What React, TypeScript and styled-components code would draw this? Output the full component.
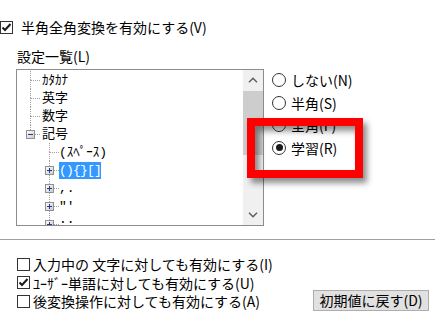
import styled, { createGlobalStyle } from 'styled-components'

const GlobalStyle = createGlobalStyle`
  html, body {
    margin: 0;
    padding: 0;
    background: #ffffff;
  }
  body {
    font-family: 'Noto Sans CJK JP', sans-serif;
    font-size: 14px;
    color: #000;
  }
`

const Page = styled.div`
  position: relative;
  width: 440px;
  height: 323px;
  overflow: hidden;
  background: #fff;
  display: flex;
  flex-direction: column;
`

const CheckRow = styled.label<{ $gap: number; $h: number }>`
  display: flex;
  align-items: center;
  gap: ${p => p.$gap}px;
  height: ${p => p.$h}px;
  line-height: ${p => p.$h}px;
  white-space: nowrap;
`

const TopRow = styled(CheckRow)`
  margin-top: 18px;
`

const Box = styled.span`
  flex: none;
  width: 13px;
  height: 13px;
  box-sizing: border-box;
  border: 1px solid #333;
  background: #fff;
  display: flex;
  align-items: center;
  justify-content: center;
`

const GroupLabel = styled.div`
  margin: 11px 0 0 17px;
  height: 18px;
  line-height: 18px;
`

const Middle = styled.div`
  display: flex;
  align-items: flex-start;
  margin-top: 4px;
`

const ListBox = styled.div`
  margin-left: 16px;
  width: 248px;
  height: 157px;
  box-sizing: border-box;
  border: 1px solid #8c8c8c;
  display: flex;
  background: #fff;
`

const TreeArea = styled.div`
  flex: 1;
  padding: 1px 0 0 4px;
  overflow: hidden;
`

const TreeRow = styled.div`
  display: flex;
  align-items: center;
  height: 18px;
`

const Label = styled.span<{ $selected?: boolean; $level: number; $tight?: boolean }>`
  margin-left: ${p => (p.$level === 0 ? 2 : 0)}px;
  height: 17px;
  line-height: 17px;
  font-family: 'Liberation Mono', 'Noto Sans CJK JP', monospace;
  font-size: 13px;
  white-space: nowrap;
  letter-spacing: ${p => (p.$tight ? '-0.8px' : '0')};
  background: ${p => (p.$selected ? '#3399ff' : 'transparent')};
  color: ${p => (p.$selected ? '#fff' : '#000')};
`

const ScrollBar = styled.div`
  flex: none;
  width: 20px;
  background: #f0f0f0;
  display: flex;
  flex-direction: column;
`

const ScrollButton = styled.div`
  height: 20px;
  display: flex;
  align-items: center;
  justify-content: center;
`

const Thumb = styled.div`
  margin-top: 1px;
  height: 64px;
  background: #cdcdcd;
`

const Track = styled.div`
  flex: 1;
`

const RadioGroup = styled.div`
  margin-left: 8px;
  display: flex;
  flex-direction: column;
`

const RadioRow = styled.label`
  display: flex;
  align-items: center;
  gap: 5px;
  height: 22.5px;
  white-space: nowrap;
`

const Circle = styled.span<{ $on?: boolean }>`
  flex: none;
  width: 14px;
  height: 14px;
  box-sizing: border-box;
  border: 1px solid #333;
  border-radius: 50%;
  background: #fff;
  display: flex;
  align-items: center;
  justify-content: center;

  &::after {
    content: '';
    display: ${p => (p.$on ? 'block' : 'none')};
    width: 7px;
    height: 7px;
    border-radius: 50%;
    background: #1a1a1a;
  }
`

const Separator = styled.div`
  margin-top: 13px;
  width: 435px;
  height: 1px;
  background: #a0a0a0;
`

const Bottom = styled.div`
  display: flex;
  justify-content: space-between;
  align-items: flex-end;
  padding: 15px 11px 0 17px;
`

const Options = styled.div`
  display: flex;
  flex-direction: column;
`

const Button = styled.button`
  width: 116px;
  height: 21px;
  padding: 0;
  box-sizing: border-box;
  border: 1px solid #adadad;
  background: #e1e1e1;
  font-family: 'Noto Sans CJK JP', sans-serif;
  font-size: 14px;
  line-height: 19px;
  color: #000;
`

const Callout = styled.div`
  position: absolute;
  left: 247px;
  top: 118px;
  width: 116px;
  height: 60px;
  box-sizing: border-box;
  border: 8px solid #ff0000;
  box-shadow: 4px 5px 6px rgba(0, 0, 0, 0.45), inset 4px 5px 6px rgba(0, 0, 0, 0.45);
`

const Check = () => (
  <svg width="11" height="11" viewBox="0 0 11 11">
    <polyline points="1.5,5.5 4,8 9.5,2" fill="none" stroke="#1a1a1a" strokeWidth="2" />
  </svg>
)

const Chevron = ({ down }: { down?: boolean }) => (
  <svg width="10" height="6" viewBox="0 0 10 6">
    <polyline
      points={down ? '1,0.8 5,4.8 9,0.8' : '1,5.2 5,1.2 9,5.2'}
      fill="none"
      stroke="#606060"
      strokeWidth="1.5"
    />
  </svg>
)

interface GutterProps {
  up?: boolean
  down?: boolean
  branch?: boolean
  expander?: 'plus' | 'minus'
}

const dot = { stroke: '#a0a0a0', strokeWidth: 1, strokeDasharray: '1 1' }

function Gutter({ up, down, branch, expander }: GutterProps) {
  const top = expander ? 5 : 9
  const bottom = expander ? 14 : 9
  return (
    <svg width="19" height="18" style={{ flex: 'none' }}>
      <defs>
        <linearGradient id="exp" x1="0" y1="0" x2="1" y2="1">
          <stop offset="0" stopColor="#ffffff" />
          <stop offset="1" stopColor="#c8c8c8" />
        </linearGradient>
      </defs>
      {up && <line x1="9.5" y1="0" x2="9.5" y2={top} {...dot} />}
      {down && <line x1="9.5" y1={bottom} x2="9.5" y2="18" {...dot} />}
      {up && down && !expander && <line x1="9.5" y1="9" x2="9.5" y2="10" {...dot} />}
      {branch && <line x1={expander ? 14 : 10} y1="9.5" x2="19" y2="9.5" {...dot} />}
      {expander && (
        <>
          <rect x="5.5" y="5.5" width="8" height="8" fill="url(#exp)" stroke="#919191" />
          <line x1="7" y1="9.5" x2="12" y2="9.5" stroke="#1f3b8c" />
          {expander === 'plus' && <line x1="9.5" y1="7" x2="9.5" y2="12" stroke="#1f3b8c" />}
        </>
      )}
    </svg>
  )
}

interface Node {
  level: number
  label: string
  expander?: 'plus' | 'minus'
  last?: boolean
  selected?: boolean
  tight?: boolean
}

const nodes: Node[] = [
  { level: 0, label: 'ｶﾀｶﾅ' },
  { level: 0, label: '英字' },
  { level: 0, label: '数字' },
  { level: 0, label: '記号', expander: 'minus', last: true },
  { level: 1, label: '(ｽﾍﾟｰｽ)' },
  { level: 1, label: '(){}[]', expander: 'plus', selected: true, tight: true },
  { level: 1, label: ',.', expander: 'plus' },
  { level: 1, label: '"\'', expander: 'plus' },
  { level: 1, label: ':;', expander: 'plus' },
]

const modes = [
  { text: 'しない(N)' },
  { text: '半角(S)' },
  { text: '全角(F)' },
  { text: '学習(R)', on: true },
]

const options = [
  { text: '入力中の 文字に対しても有効にする(I)' },
  { text: 'ﾕｰｻﾞｰ単語に対しても有効にする(U)', on: true },
  { text: '後変換操作に対しても有効にする(A)' },
]

export default function App() {
  return (
    <>
      <GlobalStyle />
      <Page>
        <TopRow $gap={8} $h={18}>
          <Box>
            <Check />
          </Box>
          <span>半角全角変換を有効にする(V)</span>
        </TopRow>

        <GroupLabel>設定一覧(L)</GroupLabel>

        <Middle>
          <ListBox>
            <TreeArea>
              {nodes.map((n, i) => (
                <TreeRow key={i}>
                  {n.level === 0 ? (
                    <Gutter up down={!n.last} branch expander={n.expander} />
                  ) : (
                    <>
                      <Gutter />
                      <Gutter up down branch expander={n.expander} />
                    </>
                  )}
                  <Label $level={n.level} $selected={n.selected} $tight={n.tight}>
                    {n.label}
                  </Label>
                </TreeRow>
              ))}
            </TreeArea>
            <ScrollBar>
              <ScrollButton>
                <Chevron />
              </ScrollButton>
              <Thumb />
              <Track />
              <ScrollButton>
                <Chevron down />
              </ScrollButton>
            </ScrollBar>
          </ListBox>

          <RadioGroup>
            {modes.map(m => (
              <RadioRow key={m.text}>
                <Circle $on={m.on} />
                <span>{m.text}</span>
              </RadioRow>
            ))}
          </RadioGroup>
        </Middle>

        <Separator />

        <Bottom>
          <Options>
            {options.map(o => (
              <CheckRow key={o.text} $gap={3} $h={18.5}>
                <Box>{o.on && <Check />}</Box>
                <span>{o.text}</span>
              </CheckRow>
            ))}
          </Options>
          <Button>初期値に戻す(D)</Button>
        </Bottom>

        <Callout />
      </Page>
    </>
  )
}
